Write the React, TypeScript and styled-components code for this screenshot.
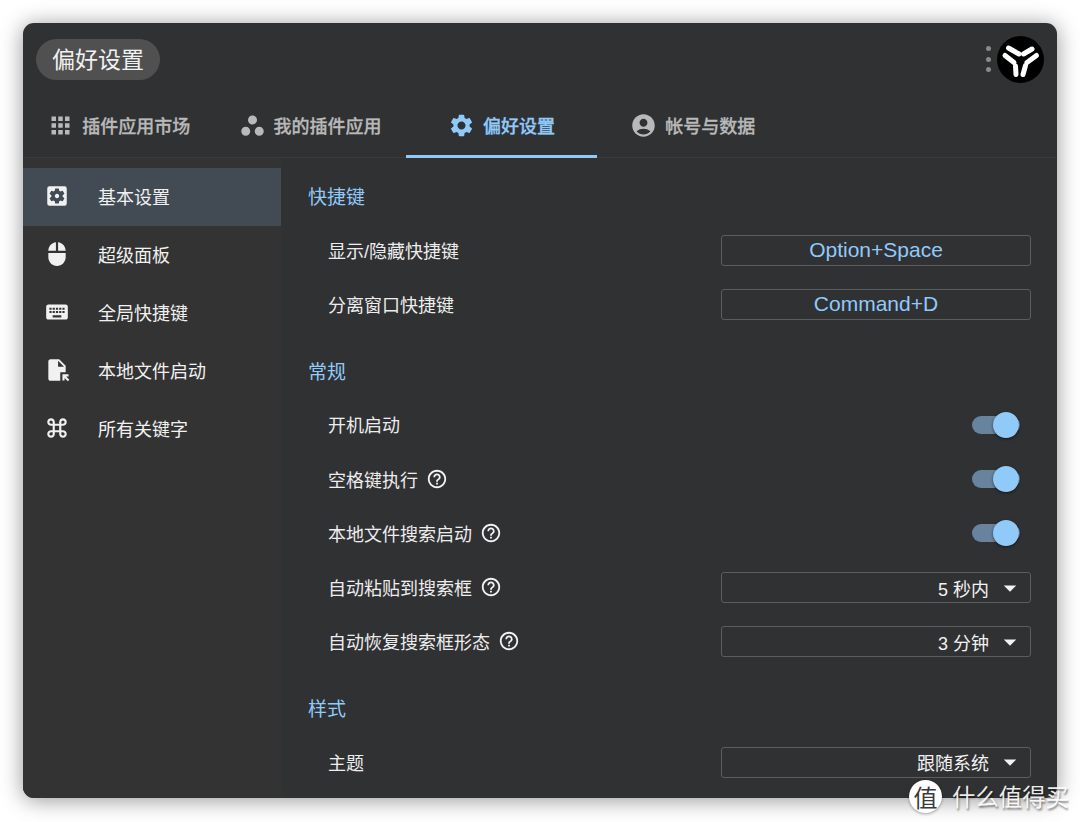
import { createGlobalStyle, styled } from "styled-components";
import type { ReactNode } from "react";
import {
  MdAccountCircle,
  MdApps,
  MdArrowDropDown,
  MdFileOpen,
  MdHelpOutline,
  MdKeyboard,
  MdKeyboardCommandKey,
  MdMouse,
  MdSettings,
  MdSettingsApplications,
  MdWorkspaces,
} from "react-icons/md";

const GlobalStyle = createGlobalStyle`
  html, body {
    margin: 0;
    background: #ffffff;
  }
  * {
    box-sizing: border-box;
  }
  body {
    font-family: "Liberation Sans", "Noto Sans CJK SC", sans-serif;
  }
`;

const Page = styled.div`
  position: relative;
  width: 1080px;
  height: 822px;
  padding: 23px;
  overflow: hidden;
  background: #ffffff;
`;

const Window = styled.div`
  display: flex;
  flex-direction: column;
  width: 1034px;
  height: 775px;
  overflow: hidden;
  border-radius: 11px;
  background: #303133;
  box-shadow: 0 2px 22px rgba(0, 0, 0, 0.42);
`;

const Header = styled.div`
  display: flex;
  align-items: center;
  justify-content: space-between;
  height: 72px;
  padding: 0 13px;
  flex-shrink: 0;
`;

const TitlePill = styled.div`
  display: flex;
  align-items: center;
  justify-content: center;
  width: 124px;
  height: 41px;
  padding-bottom: 2px;
  border-radius: 21px;
  background: #505050;
  color: #f1f1f1;
  font-size: 23px;
`;

const HeaderRight = styled.div`
  display: flex;
  align-items: center;
  gap: 6px;
`;

const Dots = styled.div`
  display: flex;
  flex-direction: column;
  gap: 5.5px;
`;

const Dot = styled.span`
  width: 5px;
  height: 5px;
  border-radius: 50%;
  background: #8a8a8a;
`;

const TabBar = styled.div`
  display: flex;
  height: 63px;
  flex-shrink: 0;
  border-bottom: 1px solid #3a3b3d;
`;

const Tab = styled.div<{ $active?: boolean }>`
  display: flex;
  align-items: center;
  justify-content: center;
  gap: 8px;
  width: 191.4px;
  height: 63px;
  border-bottom: 3px solid ${(p) => (p.$active ? "#90caf9" : "transparent")};
  color: ${(p) => (p.$active ? "#90caf9" : "#b9b9b9")};
  font-size: 18px;
  font-weight: 500;
  -webkit-text-stroke: 0.3px currentColor;
`;

const Body = styled.div`
  display: flex;
  flex: 1;
  min-height: 0;
`;

const Sidebar = styled.div`
  width: 258px;
  flex-shrink: 0;
  padding-top: 10px;
  background: #333333;
`;

const SideItem = styled.div<{ $active?: boolean }>`
  display: flex;
  align-items: center;
  gap: 28px;
  height: 58px;
  padding: 0 0 2px 21px;
  background: ${(p) => (p.$active ? "#424b54" : "transparent")};
  color: #f1f1f1;
  font-size: 18px;
`;

const Content = styled.div`
  flex: 1;
  padding: 22px 26px 0 27px;
  overflow: hidden;
`;

const SectionTitle = styled.div`
  display: flex;
  align-items: center;
  height: 34px;
  margin-bottom: 9px;
  padding-bottom: 3px;
  color: #90caf9;
  font-size: 19px;
`;

const Section = styled.div`
  margin-bottom: 23px;
`;

const Row = styled.div`
  display: flex;
  align-items: center;
  justify-content: space-between;
  height: 54.3px;
  padding-left: 20px;
  color: #ededed;
  font-size: 18px;
`;

const Label = styled.div`
  display: flex;
  align-items: center;
  gap: 8px;
  padding-bottom: 1px;
`;

const Field = styled.div`
  display: flex;
  align-items: center;
  width: 310px;
  height: 31px;
  border: 1.5px solid #5c5d5f;
  border-radius: 3px;
`;

const Shortcut = styled(Field)`
  justify-content: center;
  color: #90caf9;
  font-size: 21px;
`;

const SelectBox = styled(Field)`
  justify-content: flex-end;
  gap: 6px;
  padding-right: 5px;
  color: #f2f2f2;
  font-size: 18px;
`;

const SwitchWrap = styled.div`
  display: flex;
  align-items: center;
  justify-content: flex-end;
  width: 60px;
  padding-right: 11px;
`;

const Track = styled.div`
  display: flex;
  align-items: center;
  justify-content: flex-end;
  width: 48px;
  height: 18px;
  padding-right: 1px;
  border-radius: 9px;
  background: #67839d;
`;

const Thumb = styled.div`
  width: 26px;
  height: 26px;
  flex-shrink: 0;
  border-radius: 50%;
  background: #90caf9;
  box-shadow: 0 1px 3px rgba(0, 0, 0, 0.55);
`;

const Watermark = styled.div`
  position: absolute;
  left: 909px;
  bottom: 9px;
  display: flex;
  align-items: center;
  gap: 10px;
  color: rgba(255, 255, 255, 0.92);
  font-size: 23.4px;
  text-shadow: 1px 2px 2px rgba(0, 0, 0, 0.45);
`;

const WatermarkBadge = styled.div`
  display: flex;
  align-items: center;
  justify-content: center;
  width: 33px;
  height: 33px;
  border-radius: 50%;
  background: #ffffff;
  color: #3a3a3a;
  font-family: "Noto Sans CJK SC", sans-serif;
  font-size: 24px;
  text-shadow: none;
  box-shadow: 0 1px 3px rgba(0, 0, 0, 0.35);
`;

function Logo() {
  return (
    <svg width="47" height="47" viewBox="-23.5 -23.5 47 47">
      <circle r="23.5" fill="#000" />
      <g stroke="#fff" strokeWidth="5" strokeLinecap="round" fill="none">
        <path d="M-12 -11.5 L-1.5 -5.5" />
        <path d="M11.5 -10.5 L3 -5.5" />
        <path d="M-15.5 -4 L-6.5 3" />
        <path d="M16 -4 L6.5 3" />
        <path d="M-5 6.5 L-4.5 15" />
        <path d="M5 6 L2.5 15" />
      </g>
    </svg>
  );
}

function Help() {
  return <MdHelpOutline size={22} color="#f2f2f2" />;
}

function Switch() {
  return (
    <SwitchWrap>
      <Track>
        <Thumb />
      </Track>
    </SwitchWrap>
  );
}

function Select({ value }: { value: string }) {
  return (
    <SelectBox>
      {value}
      <MdArrowDropDown size={30} color="#f2f2f2" />
    </SelectBox>
  );
}

function SettingRow({ label, help, children }: { label: string; help?: boolean; children: ReactNode }) {
  return (
    <Row>
      <Label>
        {label}
        {help && <Help />}
      </Label>
      {children}
    </Row>
  );
}

export default function App() {
  return (
    <Page>
      <GlobalStyle />
      <Window>
        <Header>
          <TitlePill>偏好设置</TitlePill>
          <HeaderRight>
            <Dots>
              <Dot />
              <Dot />
              <Dot />
            </Dots>
            <Logo />
          </HeaderRight>
        </Header>
        <TabBar>
          <Tab>
            <MdApps size={27} />
            插件应用市场
          </Tab>
          <Tab>
            <MdWorkspaces size={27} />
            我的插件应用
          </Tab>
          <Tab $active>
            <MdSettings size={27} />
            偏好设置
          </Tab>
          <Tab>
            <MdAccountCircle size={27} />
            帐号与数据
          </Tab>
        </TabBar>
        <Body>
          <Sidebar>
            <SideItem $active>
              <MdSettingsApplications size={26} />
              基本设置
            </SideItem>
            <SideItem>
              <MdMouse size={26} />
              超级面板
            </SideItem>
            <SideItem>
              <MdKeyboard size={26} />
              全局快捷键
            </SideItem>
            <SideItem>
              <MdFileOpen size={26} />
              本地文件启动
            </SideItem>
            <SideItem>
              <MdKeyboardCommandKey size={26} />
              所有关键字
            </SideItem>
          </Sidebar>
          <Content>
            <Section>
              <SectionTitle>快捷键</SectionTitle>
              <SettingRow label="显示/隐藏快捷键">
                <Shortcut>Option+Space</Shortcut>
              </SettingRow>
              <SettingRow label="分离窗口快捷键">
                <Shortcut>Command+D</Shortcut>
              </SettingRow>
            </Section>
            <Section>
              <SectionTitle>常规</SectionTitle>
              <SettingRow label="开机启动">
                <Switch />
              </SettingRow>
              <SettingRow label="空格键执行" help>
                <Switch />
              </SettingRow>
              <SettingRow label="本地文件搜索启动" help>
                <Switch />
              </SettingRow>
              <SettingRow label="自动粘贴到搜索框" help>
                <Select value="5 秒内" />
              </SettingRow>
              <SettingRow label="自动恢复搜索框形态" help>
                <Select value="3 分钟" />
              </SettingRow>
            </Section>
            <Section>
              <SectionTitle>样式</SectionTitle>
              <SettingRow label="主题">
                <Select value="跟随系统" />
              </SettingRow>
            </Section>
          </Content>
        </Body>
      </Window>
      <Watermark>
        <WatermarkBadge>值</WatermarkBadge>
        什么值得买
      </Watermark>
    </Page>
  );
}
